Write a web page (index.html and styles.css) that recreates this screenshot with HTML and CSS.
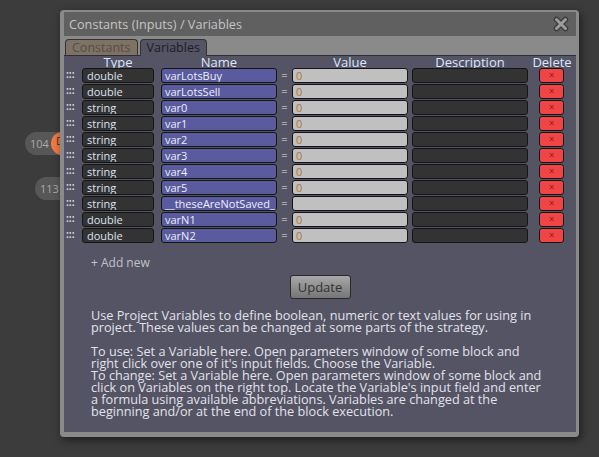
FILE: index.html
```html
<!DOCTYPE html>
<html lang="en">
<head>
    <meta charset="UTF-8">
    <title>Constants (Inputs) / Variables</title>
    <link rel="stylesheet" href="styles.css">
</head>
<body>
    <!-- Bloki w tle -->
    <div class="node node-104"><span class="num">104</span><span class="dot">D</span></div>
    <div class="node node-113"><span class="num">113</span><span class="dot"></span></div>

    <div class="dialog">
        <div class="titlebar">
            <span class="title">Constants (Inputs) / Variables</span>
            <svg class="close" width="16" height="16" viewBox="0 0 16 16">
                <path d="M3.5 3.5 L12.5 12.5 M12.5 3.5 L3.5 12.5" stroke="#3a3a3a" stroke-width="5.5" stroke-linecap="round"/>
                <path d="M3.5 3.5 L12.5 12.5 M12.5 3.5 L3.5 12.5" stroke="#9c9c9c" stroke-width="3" stroke-linecap="round"/>
            </svg>
        </div>

        <div class="tabs">
            <span class="tab tab-off">Constants</span>
            <span class="tab tab-on">Variables</span>
        </div>

        <div class="panel">
            <div class="row head">
                <span class="handle"></span>
                <span class="c-type">Type</span>
                <span class="c-name">Name</span>
                <span class="eq"></span>
                <span class="c-value">Value</span>
                <span class="c-desc">Description</span>
                <span class="c-del">Delete</span>
            </div>
            <div id="rows"></div>

            <a class="add" href="#">+ Add new</a>

            <div class="actions">
                <button class="update">Update</button>
            </div>

            <p class="help">Use Project Variables to define boolean, numeric or text values for using in<br>project. These values can be changed at some parts of the strategy.</p>
            <p class="help">To use: Set a Variable here. Open parameters window of some block and<br>right click over one of it's input fields. Choose the Variable.<br>To change: Set a Variable here. Open parameters window of some block and<br>click on Variables on the right top. Locate the Variable's input field and enter<br>a formula using available abbreviations. Variables are changed at the<br>beginning and/or at the end of the block execution.</p>
        </div>
    </div>

    <script>
        const vars = [
            ['double', 'varLotsBuy', '0'],
            ['double', 'varLotsSell', '0'],
            ['string', 'var0', '0'],
            ['string', 'var1', '0'],
            ['string', 'var2', '0'],
            ['string', 'var3', '0'],
            ['string', 'var4', '0'],
            ['string', 'var5', '0'],
            ['string', '__theseAreNotSaved__', ''],
            ['double', 'varN1', '0'],
            ['double', 'varN2', '0']
        ];

        const rows = document.getElementById('rows');
        vars.forEach(v => {
            const row = document.createElement('div');
            row.classList.add('row');
            row.innerHTML = `
                <span class="handle">:::</span>
                <span class="box c-type">${v[0]}</span>
                <span class="box c-name">${v[1]}</span>
                <span class="eq">=</span>
                <span class="box c-value">${v[2]}</span>
                <span class="box c-desc"></span>
                <span class="box c-del">&times;</span>
            `;
            rows.appendChild(row);
        });
    </script>
</body>
</html>
```

FILE: styles.css
```css
body {
    margin: 0;
    width: 599px;
    height: 457px;
    background-color: #3c3c3c;
    font-family: "Open Sans", "Noto Sans", sans-serif;
    position: relative;
    overflow: hidden;
}

/* Bloki w tle */
.node {
    position: absolute;
    display: flex;
    align-items: center;
    height: 23px;
    border-radius: 12px;
    background-color: #575757;
    color: #aaaaaa;
    font-size: 11px;
}

.node-104 {
    left: 25px;
    top: 132px;
}

.node-113 {
    left: 35px;
    top: 177px;
}

.node .num {
    padding: 0 2px 0 5px;
}

.node .dot {
    width: 26px;
    height: 23px;
    border-radius: 12px;
    background-color: #f07a40;
    color: #5a2a10;
    font-size: 11px;
    padding-left: 5px;
    line-height: 18px;
    box-sizing: border-box;
}

/* Okno */
.dialog {
    position: absolute;
    left: 60px;
    top: 10px;
    width: 519px;
    height: 427px;
    box-sizing: border-box;
    padding: 2px 3px 5px 4px;
    background-color: #8a8a8a;
    border-radius: 4px;
    box-shadow: 2px 3px 8px rgba(0,0,0,0.55);
    display: flex;
    flex-direction: column;
}

.titlebar {
    height: 24px;
    background-color: #606060;
    display: flex;
    align-items: center;
    justify-content: space-between;
    padding: 0 7px 0 5px;
}

.title {
    color: #c4c4c4;
    font-size: 12.7px;
}

.tabs {
    display: flex;
    gap: 2px;
    padding: 3px 0 0 1px;
    height: 16px;
}

.tab {
    font-size: 12.5px;
    line-height: 15px;
    padding: 0 6px;
    border: 1px solid #333;
    border-bottom: none;
    border-radius: 4px 4px 0 0;
}

.tab-off {
    background-color: #7e7264;
    color: #574d43;
}

.tab-on {
    background-color: #545465;
    color: #1c1c24;
    position: relative;
    z-index: 1;
    height: 16px;
}

.panel {
    flex: 1;
    background-color: #545465;
    border-top: 1px solid #2e2e38;
}

.row {
    display: flex;
    align-items: stretch;
    height: 15px;
    margin-bottom: 1px;
    font-size: 11px;
}

.row.head {
    height: 12px;
    margin-bottom: 0;
    font-size: 13px;
    line-height: 12px;
    color: #dce6ff;
    text-align: center;
}

.handle {
    width: 18px;
    color: #dcdcdc;
    font-size: 10px;
    font-weight: bold;
    line-height: 13px;
    padding-left: 2px;
    box-sizing: border-box;
}

.box {
    border: 1px solid #151515;
    border-radius: 3px;
    box-sizing: border-box;
    line-height: 13px;
    padding-left: 4px;
    overflow: hidden;
    white-space: nowrap;
}

.c-type {
    width: 72px;
}

.box.c-type {
    background-color: #333333;
    color: #dde2f0;
}

.c-name {
    width: 116px;
    margin-left: 7px;
}

.box.c-name {
    background-color: #5a5a9e;
    color: #eceefa;
    padding-left: 3px;
}

.eq {
    width: 15px;
    text-align: center;
    color: #e0e0e0;
    line-height: 14px;
}

.c-value {
    width: 116px;
}

.box.c-value {
    background-color: #c0c0c0;
    color: #a87a30;
    padding-left: 3px;
}

.c-desc {
    width: 116px;
    margin-left: 4px;
}

.box.c-desc {
    background-color: #333333;
}

.c-del {
    width: 25px;
    margin-left: 11px;
}

.row.head .c-del {
    width: 40px;
    margin-left: 4px;
}

.box.c-del {
    background-color: #ef4545;
    color: #9a2020;
    text-align: center;
    padding: 0;
    font-size: 10px;
}

.add {
    display: block;
    margin: 11px 0 0 27px;
    font-size: 12px;
    color: #c2c2c8;
    text-decoration: none;
}

.actions {
    display: flex;
    justify-content: center;
    margin-top: 4px;
}

.update {
    width: 61px;
    height: 24px;
    font-family: inherit;
    font-size: 13px;
    color: #333;
    border: 1px solid #2a2a2a;
    border-radius: 3px;
    background: linear-gradient(#a8a8a8, #767676);
    padding: 0;
}

.help {
    margin: 10px 0 0 27px;
    font-size: 12.7px;
    line-height: 12px;
    color: #e2e2ea;
    white-space: nowrap;
}

.help + .help {
    margin-top: 12px;
}
```
